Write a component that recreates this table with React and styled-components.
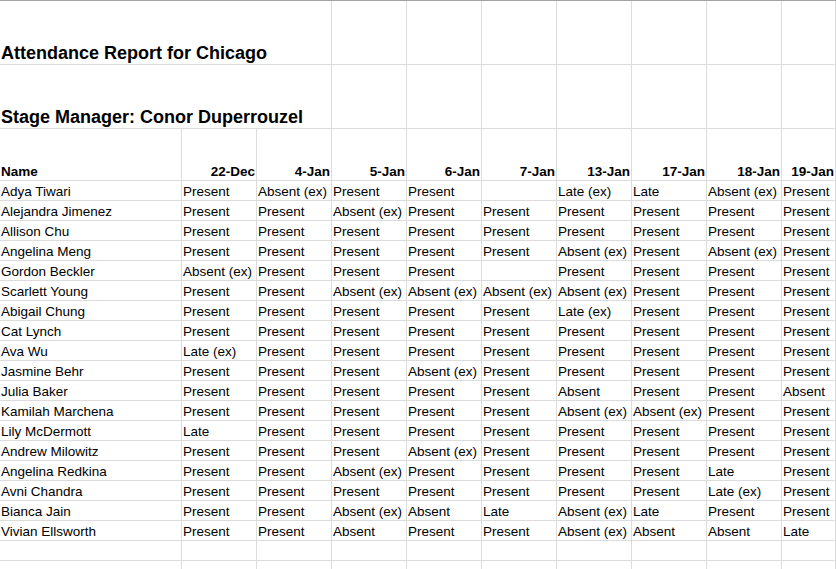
import React from 'react';
import styled, { createGlobalStyle } from 'styled-components';

const GlobalStyle = createGlobalStyle`
  html, body {
    margin: 0;
    padding: 0;
    background: #ffffff;
    overflow: hidden;
  }
  body {
    font-family: "Liberation Sans", Arial, sans-serif;
    color: #000000;
  }
`;

const Sheet = styled.div`
  display: grid;
  grid-template-columns: 182px repeat(8, 75px) 54px;
  grid-template-rows: 64px 64px 52px;
  grid-auto-rows: 20px;
  border-top: 1px solid #a3a3a3;
  width: 836px;
`;

const Cell = styled.div`
  box-sizing: border-box;
  display: flex;
  align-items: flex-end;
  justify-content: ${p => (p.$right ? 'flex-end' : 'flex-start')};
  grid-column: span ${p => p.$span || 1};
  border-right: 1px solid #dcdcdc;
  border-bottom: 1px solid #dcdcdc;
  padding: 0 1px 0 1px;
  font-size: 13.5px;
  line-height: 16px;
  font-weight: ${p => (p.$bold ? 700 : 400)};
  white-space: nowrap;
  overflow: visible;
`;

const TitleCell = styled(Cell)`
  font-size: 18px;
  line-height: 20px;
  font-weight: 700;
  padding-bottom: 1px;
`;

const dates = ['22-Dec', '4-Jan', '5-Jan', '6-Jan', '7-Jan', '13-Jan', '17-Jan', '18-Jan', '19-Jan'];

const P = 'Present';
const AX = 'Absent (ex)';
const A = 'Absent';
const LX = 'Late (ex)';
const L = 'Late';

const people = [
  ['Adya Tiwari', [P, AX, P, P, '', LX, L, AX, P]],
  ['Alejandra Jimenez', [P, P, AX, P, P, P, P, P, P]],
  ['Allison Chu', [P, P, P, P, P, P, P, P, P]],
  ['Angelina Meng', [P, P, P, P, P, AX, P, AX, P]],
  ['Gordon Beckler', [AX, P, P, P, '', P, P, P, P]],
  ['Scarlett Young', [P, P, AX, AX, AX, AX, P, P, P]],
  ['Abigail Chung', [P, P, P, P, P, LX, P, P, P]],
  ['Cat Lynch', [P, P, P, P, P, P, P, P, P]],
  ['Ava Wu', [LX, P, P, P, P, P, P, P, P]],
  ['Jasmine Behr', [P, P, P, AX, P, P, P, P, P]],
  ['Julia Baker', [P, P, P, P, P, A, P, P, A]],
  ['Kamilah Marchena', [P, P, P, P, P, AX, AX, P, P]],
  ['Lily McDermott', [L, P, P, P, P, P, P, P, P]],
  ['Andrew Milowitz', [P, P, P, AX, P, P, P, P, P]],
  ['Angelina Redkina', [P, P, AX, P, P, P, P, L, P]],
  ['Avni Chandra', [P, P, P, P, P, P, P, LX, P]],
  ['Bianca Jain', [P, P, AX, A, L, AX, L, P, P]],
  ['Vivian Ellsworth', [P, P, A, P, P, AX, A, A, L]],
];

function TitleRow({ text }) {
  return (
    <>
      <TitleCell $span={3}>{text}</TitleCell>
      {Array.from({ length: 7 }, (_, i) => <Cell key={i} />)}
    </>
  );
}

function EmptyRow() {
  return (
    <>
      <Cell />
      {dates.map(d => <Cell key={d} />)}
    </>
  );
}

export default function App() {
  return (
    <>
      <GlobalStyle />
      <Sheet>
        <TitleRow text="Attendance Report for Chicago" />
        <TitleRow text="Stage Manager: Conor Duperrouzel" />

        <Cell $bold>Name</Cell>
        {dates.map(d => <Cell key={d} $bold $right>{d}</Cell>)}

        {people.map(([name, marks]) => (
          <React.Fragment key={name}>
            <Cell>{name}</Cell>
            {marks.map((m, i) => <Cell key={i}>{m}</Cell>)}
          </React.Fragment>
        ))}

        <EmptyRow />
        <EmptyRow />
      </Sheet>
    </>
  );
}
